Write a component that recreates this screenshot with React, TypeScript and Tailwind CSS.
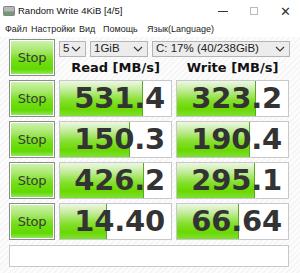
import React from 'react';

const rows = [
  { read: '531.4', readW: 83, write: '323.2', writeW: 79 },
  { read: '150.3', readW: 70, write: '190.4', writeW: 73 },
  { read: '426.2', readW: 84, write: '295.1', writeW: 78 },
  { read: '14.40', readW: 47, write: '66.64', writeW: 62 },
];

const menu = [
  { label: 'Файл', w: 'w-[26px]' },
  { label: 'Настройки', w: 'w-[48px]' },
  { label: 'Вид', w: 'w-[24px]' },
  { label: 'Помощь', w: 'w-[44px]' },
  { label: 'Язык(Language)', w: '' },
];

function StopButton() {
  return (
    <div className="w-[46px] h-[37px] shrink-0 border border-[#8c8c8c] p-px bg-white">
      <div className="h-full w-full flex items-center justify-center bg-[linear-gradient(to_bottom,#cdf2ad_0%,#a6e86a_30%,#74e01a_55%,#62d800_85%,#8ee85a_100%)] text-[13px] text-[#3a3a3a] font-['DejaVu_Sans',sans-serif] tracking-[-0.3px]">
        Stop
      </div>
    </div>
  );
}

function Chevron() {
  return (
    <svg width="10" height="6" viewBox="0 0 10 6" className="shrink-0">
      <path d="M1 1 L5 5 L9 1" fill="none" stroke="#333" strokeWidth="1.1" />
    </svg>
  );
}

function Combo({ label, width }: { label: string; width: string }) {
  return (
    <div className={`${width} h-[16px] flex items-center justify-between border border-[#b4b4b4] bg-[#ececec] pl-[3px] pr-[4px] text-[11.5px] leading-none text-[#222] font-['Liberation_Sans',sans-serif]`}>
      <span>{label}</span>
      <Chevron />
    </div>
  );
}

function Result({ value, bar }: { value: string; bar: number }) {
  return (
    <div className="relative w-[113px] h-[37px] shrink-0 border border-[#c8c8c8] bg-white overflow-hidden">
      <div
        className="absolute left-0 top-0 bottom-0 border-r border-[#5aa828] bg-[linear-gradient(to_bottom,#eef8e6_0%,#c4ec9c_25%,#86e030_55%,#6ad800_80%,#7ee034_100%)]"
        style={{ width: bar }}
      />
      <div className="relative h-full flex items-center justify-end pr-[6px] text-[29px] font-bold leading-none text-[#333] font-['DejaVu_Sans',sans-serif] tracking-[-0.2px]">
        {value}
      </div>
    </div>
  );
}

export default function App() {
  return (
    <div className="w-[300px] h-[273px] bg-white flex flex-col overflow-hidden">
      {/* Title bar */}
      <div className="h-[22px] flex items-center pl-[3px] text-[9.5px] text-[#111] font-['Liberation_Sans',sans-serif]">
        <svg width="12" height="10" viewBox="0 0 13 11" className="mr-[3px]">
          <rect x="0.5" y="0.5" width="12" height="10" rx="1" fill="#b8b8b8" stroke="#777" />
          <rect x="1" y="6" width="11" height="4" fill="#8a8a8a" />
          <rect x="2" y="7" width="5" height="2" fill="#39c839" />
        </svg>
        <span>Random Write 4KiB [4/5]</span>
        <div className="ml-auto flex items-center h-full">
          <div className="w-[30px] flex justify-center">
            <div className="w-[10px] h-px bg-[#333]" />
          </div>
          <div className="w-[32px] flex justify-center">
            <div className="w-[8px] h-[8px] border border-[#bbb]" />
          </div>
          <div className="w-[30px] flex justify-center text-[13px] font-light text-[#333] leading-none">✕</div>
        </div>
      </div>

      {/* Menu */}
      <div className="h-[15px] flex items-center pl-[5px] text-[9px] text-[#222] font-['Liberation_Sans',sans-serif] leading-none">
        {menu.map((m) => (
          <span key={m.label} className={`${m.w} shrink-0`}>{m.label}</span>
        ))}
      </div>

      {/* Content */}
      <div className="flex-1 bg-[repeating-linear-gradient(135deg,#f6f6f6_0px,#f6f6f6_2px,#fdfdfd_2px,#fdfdfd_4px)] pl-[9px] pt-[2px] flex flex-col gap-[4px]">
        <div className="flex gap-[4px]">
          <StopButton />
          <div className="flex flex-col">
            <div className="flex gap-[4px] mt-[2px]">
              <Combo label="5" width="w-[27px]" />
              <Combo label="1GiB" width="w-[58px]" />
              <Combo label="C: 17% (40/238GiB)" width="w-[138px]" />
            </div>
            <div className="flex gap-[4px] mt-[4px] text-[13px] font-bold text-[#111] font-['DejaVu_Sans',sans-serif] leading-none">
              <div className="w-[113px] text-center">Read [MB/s]</div>
              <div className="w-[113px] text-center">Write [MB/s]</div>
            </div>
          </div>
        </div>

        {rows.map((r, i) => (
          <div key={i} className="flex gap-[4px]">
            <StopButton />
            <Result value={r.read} bar={r.readW} />
            <Result value={r.write} bar={r.writeW} />
          </div>
        ))}

        <div className="w-[280px] h-[22px] mt-[1px] border border-[#c8c8c8] bg-white" />
      </div>
    </div>
  );
}
